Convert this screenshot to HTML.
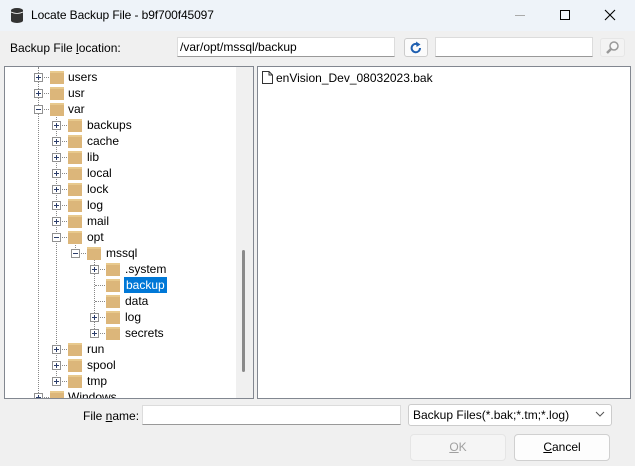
<!DOCTYPE html>
<html><head><style>
*{box-sizing:border-box;margin:0;padding:0}
body{width:635px;height:466px;background:#f0f0f0;font-family:"Liberation Sans",sans-serif;font-size:12px;color:#000;position:relative;overflow:hidden}
.a{position:absolute}
.title{left:0;top:0;width:635px;height:31px;background:#eef3f9}
.box{background:#fff;border:1px solid #dcdcdc;border-bottom:1px solid #999}
.row{position:absolute;height:16px;line-height:16px;white-space:nowrap}
.ex{position:absolute;width:9px;height:9px;border:1px solid #919191;background:#fff;top:4px}
.ex:before{content:"";position:absolute;left:1px;top:3px;width:5px;height:1px;background:#2c3e6b}
.ex.p:after{content:"";position:absolute;left:3px;top:1px;width:1px;height:5px;background:#2c3e6b}
.fd{position:absolute;width:14px;height:13px;top:2px;background:#dcb67a;border-top:2px solid #e8c98d}
.dh{position:absolute;top:8px;height:1px;border-top:1px dotted #888}
.dv{position:absolute;width:1px;border-left:1px dotted #888}
.tx{position:absolute;top:0}
</style></head><body>
<div class="a title"></div>
<svg class="a" style="left:10px;top:7px" width="14" height="16"><ellipse cx="7" cy="3.5" rx="6" ry="2.5" fill="#333"/><rect x="1" y="3.5" width="12" height="10" fill="#333"/><ellipse cx="7" cy="13.5" rx="6" ry="2.5" fill="#333"/><path d="M1 5 Q7 8 13 5" stroke="#fff" stroke-width="0.8" fill="none"/></svg>
<div class="a" style="left:31px;top:8px;font-size:12px;letter-spacing:-0.1px">Locate Backup File - b9f700f45097</div>
<div class="a" style="left:515px;top:15px;width:10px;height:1px;background:#aaa"></div>
<div class="a" style="left:560px;top:10px;width:10px;height:10px;border:1px solid #000"></div>
<svg class="a" style="left:604px;top:9px" width="12" height="12"><path d="M1 1L11 11M11 1L1 11" stroke="#000" stroke-width="1.1"/></svg>

<div class="a" style="left:10px;top:41px">Backup File <u>l</u>ocation:</div>
<div class="a box" style="left:177px;top:37px;width:218px;height:20px;padding:2px 2px;line-height:15px">/var/opt/mssql/backup</div>
<div class="a" style="left:404px;top:38px;width:24px;height:19px;border:1px solid #ccc;border-radius:3px;background:#fbfbfb"></div>
<svg class="a" style="left:409px;top:41px" width="14" height="14"><path d="M11 7A4.2 4.2 0 1 1 8.5 3.2" stroke="#1f5fb0" stroke-width="2" fill="none"/><path d="M7 0.5L11.5 3.5L7.5 6Z" fill="#1f5fb0"/></svg>
<div class="a box" style="left:435px;top:37px;width:158px;height:20px"></div>
<div class="a" style="left:600px;top:38px;width:25px;height:19px;border:1px solid #e6e6e6;border-radius:3px;background:#f3f3f3"></div>
<svg class="a" style="left:605px;top:40px" width="15" height="15"><circle cx="9" cy="6" r="4" stroke="#999" stroke-width="1.5" fill="#f8f8f8"/><path d="M6 9L2 13" stroke="#999" stroke-width="2.5"/></svg>

<div class="a" style="left:4px;top:66px;width:250px;height:333px;background:#fff;border:1px solid #828790;overflow:hidden">
<div class="a" style="left:231px;top:0;width:17px;height:331px;background:#f0f0f0"></div>
<div class="a" style="left:237px;top:183px;width:3px;height:122px;background:#8a8a8a;border-radius:2px"></div>
<div style="position:absolute;left:-4px;top:-66px;width:250px;height:470px">
<div class="dv" style="left:37px;top:66px;height:340px"></div>
<div class="dv" style="left:55px;top:113px;height:272px"></div>
<div class="dv" style="left:74px;top:241px;height:16px"></div>
<div class="dv" style="left:93px;top:257px;height:75px"></div>

<div class="row" style="top:68px"><div class="ex p" style="left:33px"></div><div class="dh" style="left:43px;width:5px"></div><div class="fd" style="left:49px"></div><div class="tx" style="left:67px">users</div></div>
<div class="row" style="top:84px"><div class="ex p" style="left:33px"></div><div class="dh" style="left:43px;width:5px"></div><div class="fd" style="left:49px"></div><div class="tx" style="left:67px">usr</div></div>
<div class="row" style="top:100px"><div class="ex" style="left:33px"></div><div class="dh" style="left:43px;width:5px"></div><div class="fd" style="left:49px"></div><div class="tx" style="left:67px">var</div></div>
<div class="row" style="top:116px"><div class="ex p" style="left:51px"></div><div class="dh" style="left:61px;width:5px"></div><div class="fd" style="left:67px"></div><div class="tx" style="left:86px">backups</div></div>
<div class="row" style="top:132px"><div class="ex p" style="left:51px"></div><div class="dh" style="left:61px;width:5px"></div><div class="fd" style="left:67px"></div><div class="tx" style="left:86px">cache</div></div>
<div class="row" style="top:148px"><div class="ex p" style="left:51px"></div><div class="dh" style="left:61px;width:5px"></div><div class="fd" style="left:67px"></div><div class="tx" style="left:86px">lib</div></div>
<div class="row" style="top:164px"><div class="ex p" style="left:51px"></div><div class="dh" style="left:61px;width:5px"></div><div class="fd" style="left:67px"></div><div class="tx" style="left:86px">local</div></div>
<div class="row" style="top:180px"><div class="ex p" style="left:51px"></div><div class="dh" style="left:61px;width:5px"></div><div class="fd" style="left:67px"></div><div class="tx" style="left:86px">lock</div></div>
<div class="row" style="top:196px"><div class="ex p" style="left:51px"></div><div class="dh" style="left:61px;width:5px"></div><div class="fd" style="left:67px"></div><div class="tx" style="left:86px">log</div></div>
<div class="row" style="top:212px"><div class="ex p" style="left:51px"></div><div class="dh" style="left:61px;width:5px"></div><div class="fd" style="left:67px"></div><div class="tx" style="left:86px">mail</div></div>
<div class="row" style="top:228px"><div class="ex" style="left:51px"></div><div class="dh" style="left:61px;width:5px"></div><div class="fd" style="left:67px"></div><div class="tx" style="left:86px">opt</div></div>
<div class="row" style="top:244px"><div class="ex" style="left:70px"></div><div class="dh" style="left:80px;width:5px"></div><div class="fd" style="left:86px"></div><div class="tx" style="left:105px">mssql</div></div>
<div class="row" style="top:260px"><div class="ex p" style="left:89px"></div><div class="dh" style="left:99px;width:5px"></div><div class="fd" style="left:105px"></div><div class="tx" style="left:124px">.system</div></div>
<div class="row" style="top:276px"><div class="dh" style="left:94px;width:10px"></div><div class="fd" style="left:105px"></div><div class="tx" style="left:123px;background:#0078d7;color:#fff;padding:0 2px">backup</div></div>
<div class="row" style="top:292px"><div class="dh" style="left:94px;width:10px"></div><div class="fd" style="left:105px"></div><div class="tx" style="left:124px">data</div></div>
<div class="row" style="top:308px"><div class="ex p" style="left:89px"></div><div class="dh" style="left:99px;width:5px"></div><div class="fd" style="left:105px"></div><div class="tx" style="left:124px">log</div></div>
<div class="row" style="top:324px"><div class="ex p" style="left:89px"></div><div class="dh" style="left:99px;width:5px"></div><div class="fd" style="left:105px"></div><div class="tx" style="left:124px">secrets</div></div>
<div class="row" style="top:340px"><div class="ex p" style="left:51px"></div><div class="dh" style="left:61px;width:5px"></div><div class="fd" style="left:67px"></div><div class="tx" style="left:86px">run</div></div>
<div class="row" style="top:356px"><div class="ex p" style="left:51px"></div><div class="dh" style="left:61px;width:5px"></div><div class="fd" style="left:67px"></div><div class="tx" style="left:86px">spool</div></div>
<div class="row" style="top:372px"><div class="ex p" style="left:51px"></div><div class="dh" style="left:61px;width:5px"></div><div class="fd" style="left:67px"></div><div class="tx" style="left:86px">tmp</div></div>
<div class="row" style="top:388px"><div class="ex p" style="left:33px"></div><div class="dh" style="left:43px;width:5px"></div><div class="fd" style="left:49px"></div><div class="tx" style="left:67px">Windows</div></div>
</div></div>

<div class="a" style="left:257px;top:66px;width:374px;height:333px;background:#fff;border:1px solid #828790"></div>
<svg class="a" style="left:262px;top:71px" width="11" height="13"><path d="M0.5 0.5H7L10.5 4V12.5H0.5Z M7 0.5V4H10.5" stroke="#333" fill="#fff"/></svg>
<div class="a" style="left:276px;top:71px">enVision_Dev_08032023.bak</div>

<div class="a" style="left:83px;top:409px">File <u>n</u>ame:</div>
<div class="a box" style="left:142px;top:405px;width:259px;height:20px"></div>
<div class="a" style="left:408px;top:404px;width:204px;height:22px;background:#fff;border:1px solid #ccc;border-radius:3px;padding:3px 4px;line-height:14px">Backup Files(*.bak;*.tm;*.log)</div>
<svg class="a" style="left:595px;top:411px" width="10" height="6"><path d="M1 1L5 5L9 1" stroke="#555" fill="none"/></svg>
<div class="a" style="left:410px;top:434px;width:96px;height:27px;border:1px solid #e5e5e5;border-radius:4px;background:#f5f5f5;color:#a0a0a0;text-align:center;line-height:25px"><u>O</u>K</div>
<div class="a" style="left:514px;top:434px;width:96px;height:27px;border:1px solid #d0d0d0;border-radius:4px;background:#fdfdfd;text-align:center;line-height:25px"><u>C</u>ancel</div>
</body></html>
